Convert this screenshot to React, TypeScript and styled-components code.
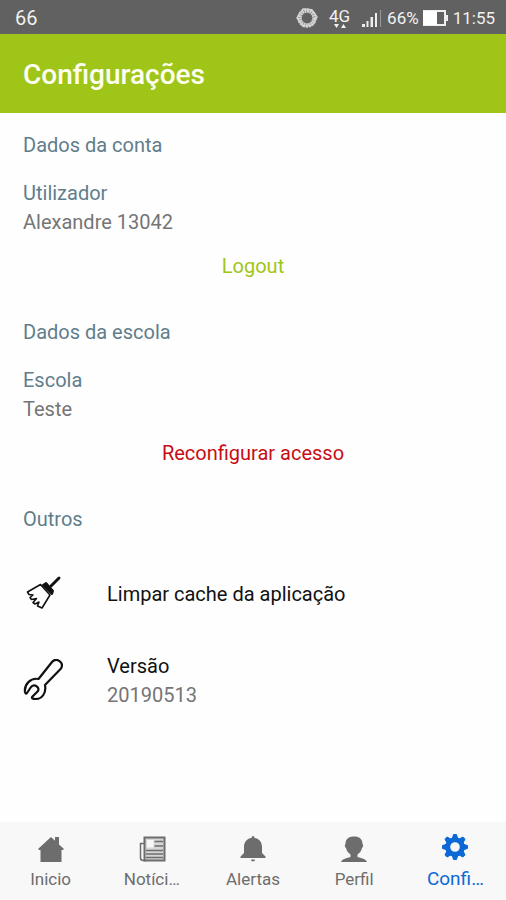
import React from 'react';
import styled, { createGlobalStyle } from 'styled-components';

const GlobalStyle = createGlobalStyle`
  * { box-sizing: border-box; }
  body {
    margin: 0;
    background: #fefefe;
    font-family: Roboto, "Liberation Sans", sans-serif;
    font-size: 20px;
    color: #757575;
  }
  button { font: inherit; border: 0; background: none; padding: 0; cursor: pointer; }
`;

const Screen = styled.div`
  min-height: 100vh;
  display: flex;
  flex-direction: column;
`;

const StatusBar = styled.div`
  display: flex;
  align-items: center;
  justify-content: space-between;
  height: 34px;
  padding: 2px 11px 0 15px;
  background: #616161;
  color: #f2f2f2;
  line-height: 32px;
`;

const StatusItems = styled.div`
  display: flex;
  align-items: center;
  font-size: 17px;
`;

const StatusIcon = styled.svg<{ $gap: number }>`
  display: block;
  margin-right: ${(p) => p.$gap}px;
`;

const Network = styled.span`
  display: flex;
  flex-direction: column;
  align-items: center;
  margin-right: 12px;
  font-size: 17px;
  line-height: 16px;
`;

const Header = styled.header`
  display: flex;
  align-items: center;
  height: 79px;
  padding: 2px 23px 0;
  background: #a0c519;
`;

const Title = styled.h1`
  margin: 0;
  font-size: 28px;
  font-weight: 500;
  line-height: 32px;
  color: #fdfeef;
`;

const Main = styled.main`
  flex: 1;
  padding: 18px 23px;
`;

const Section = styled.section`
  display: flex;
  flex-direction: column;
  margin-bottom: 38px;
`;

const Heading = styled.h2`
  margin: 0 0 20px;
  font-size: 20px;
  font-weight: 400;
  line-height: 28px;
  color: #607d8b;
`;

const Line = styled.div<{ $color?: string }>`
  line-height: 29px;
  color: ${(p) => p.$color ?? '#757575'};
`;

const Action = styled.button<{ $color: string }>`
  && {
    align-self: center;
    margin-top: 15px;
    line-height: 28px;
    color: ${(p) => p.$color};
  }
`;

const OptionList = styled.div`
  display: flex;
  flex-direction: column;
  gap: 29px;
  padding-top: 12px;
`;

const Option = styled.button`
  && {
    display: flex;
    align-items: center;
    gap: 44px;
    min-height: 58px;
    text-align: left;
    color: #111;
  }
`;

const OptionIcon = styled.svg`
  display: block;
  flex: none;
`;

const Nav = styled.nav`
  display: grid;
  grid-template-columns: repeat(5, 1fr);
  height: 78px;
  background: #f8f8f8;
`;

const Tab = styled.button<{ $active?: boolean }>`
  && {
    display: flex;
    flex-direction: column;
    align-items: center;
    padding-top: ${(p) => (p.$active ? 11 : 13)}px;
    font-size: ${(p) => (p.$active ? 19 : 17)}px;
    line-height: ${(p) => (p.$active ? 36 : 32)}px;
    color: ${(p) => (p.$active ? '#0b69d6' : '#6d6d6d')};
    white-space: nowrap;
  }
`;

const TabIcon = styled.svg`
  display: block;
  flex: none;
`;

const gearTeeth = [0, 45, 90, 135, 180, 225, 270, 315];

const icons = {
  home: (
    <path d="M1 14 14 2l4 3.700V2h4v7.400l5 4.600-1 1h-1.500v12h-21V15H2z" fill="currentColor" />
  ),
  news: (
    <g fill="none" stroke="currentColor">
      <path d="M6.500 2.500h20v23h-20z" fill="#d6d6d6" strokeWidth="2" />
      <path d="M6 8.500H2.500V23q0 2.500 3 2.500h3" strokeWidth="1.500" />
      <path d="M16.500 6.500H25M16.500 11H25M8 15.500h17M8 19h17M8 22.500h17" strokeWidth="1.500" />
      <path d="M9 5h6.500v7.500H9z" fill="#f8f8f8" stroke="none" />
    </g>
  ),
  bell: (
    <path
      d="M12.500 3q0-2 1.500-2t1.500 2C20.500 3.500 23 7.500 23 12v6l3.500 3.500V23h-25v-1.500L5 18v-6c0-4.500 2.500-8.500 7.500-9zM12 24.500h4q0 2-2 2t-2-2z"
      fill="currentColor"
    />
  ),
  person: (
    <path
      d="M14 1.500c5.500 0 8.500 2.500 8.500 7.500 1 .5 1 3-.5 4-.8 3.500-2.500 5-4.500 6.500V22c5 1.500 8.500 2 9.500 5H1c1-3 4.500-3.500 9.500-5v-2.500C8.500 18 6.800 16.500 6 13c-1.500-1-1.500-3.500-.5-4 0-5 3-7.500 8.500-7.500z"
      fill="currentColor"
    />
  ),
  gear: (
    <g>
      <circle cx="14" cy="14" r="7.300" fill="none" stroke="currentColor" strokeWidth="5" />
      {gearTeeth.map((angle) => (
        <path
          key={angle}
          d="M11.500 5 12.500 1.500h3L16.500 5z"
          fill="currentColor"
          stroke="currentColor"
          strokeLinejoin="round"
          transform={`rotate(${angle} 14 14)`}
        />
      ))}
    </g>
  ),
};

type IconName = keyof typeof icons;

const tabs: { label: string; icon: IconName; active?: boolean }[] = [
  { label: 'Inicio', icon: 'home' },
  { label: 'Notíci…', icon: 'news' },
  { label: 'Alertas', icon: 'bell' },
  { label: 'Perfil', icon: 'person' },
  { label: 'Confi…', icon: 'gear', active: true },
];

export default function App() {
  return (
    <Screen>
      <GlobalStyle />
      <StatusBar>
        <span>66</span>
        <StatusItems>
          <StatusIcon $gap={10} width="24" height="22" viewBox="0 0 24 22" fill="none" stroke="#d2d2d2">
            <circle cx="12" cy="11" r="7.500" strokeWidth="4.500" strokeDasharray="2.200 .5" />
            <path d="m8 2 9 1 5 7-5 8-9 1-6-8z" strokeWidth="1.500" />
          </StatusIcon>
          <Network>
            4G
            <svg width="14" height="5" viewBox="0 0 14 5" fill="#f2f2f2">
              <path d="M1 0h5L3.500 4zM8 4h5L10.500 0z" />
            </svg>
          </Network>
          <StatusIcon $gap={5} width="20" height="19" viewBox="0 0 20 19" fill="#eee">
            <path d="M0 15h3v3H0zM4.500 12h2v6h-2zM8.500 8h2.500v10H8.500zM13 4h2v14h-2z" />
            <path d="M18 1h1v17h-1z" fill="#999" />
          </StatusIcon>
          <span>66%</span>
          <StatusIcon $gap={4} width="30" height="18" viewBox="0 0 30 18">
            <path d="M5 2h21v14H5z" fill="#616161" stroke="#eee" strokeWidth="2" />
            <path d="M4 2h14v14H4z" fill="#fff" />
            <path d="M27 6h2v6h-2z" fill="#eee" />
          </StatusIcon>
          <span>11:55</span>
        </StatusItems>
      </StatusBar>

      <Header>
        <Title>Configurações</Title>
      </Header>

      <Main>
        <Section>
          <Heading>Dados da conta</Heading>
          <Line $color="#607d8b">Utilizador</Line>
          <Line>Alexandre 13042</Line>
          <Action $color="#a0c519">Logout</Action>
        </Section>
        <Section>
          <Heading>Dados da escola</Heading>
          <Line $color="#607d8b">Escola</Line>
          <Line>Teste</Line>
          <Action $color="#c90c14">Reconfigurar acesso</Action>
        </Section>
        <Section>
          <Heading>Outros</Heading>
          <OptionList>
            <Option>
              <OptionIcon width="40" height="40" viewBox="0 0 40 40" fill="none" stroke="#111">
                <path d="m28 12 8-8" strokeWidth="3" strokeLinecap="round" />
                <path d="m20 11 3-2 7 8-1 3z" fill="#111" strokeWidth="2" strokeLinejoin="round" />
                <path
                  d="M17.500 10.500 4.500 18l1.500 2.500 4 .5-3 2.500 1.500 2 5-1-3.500 4 2 1.500 4-2-1.500 4L19 34l8-13z"
                  strokeWidth="1.600"
                  strokeLinejoin="round"
                />
              </OptionIcon>
              <Line $color="#111">Limpar cache da aplicação</Line>
            </Option>
            <Option>
              <OptionIcon width="40" height="44" viewBox="0 0 40 44" fill="none" stroke="#111" strokeWidth="2.200" strokeLinejoin="round">
                <path d="M15.500 20 29 3c4.500-5 12.500.5 9 6.500L22 26c1.500 8-3 14-9 14-3.500 0-5-1-3.500-2.500l5.500-5.500c1.800-4-3.500-7.500-7-4l-4 6c-1 1-1.700.500-2-1C1 25.500 7.500 18.500 15.500 20z" />
              </OptionIcon>
              <div>
                <Line $color="#111">Versão</Line>
                <Line>20190513</Line>
              </div>
            </Option>
          </OptionList>
        </Section>
      </Main>

      <Nav>
        {tabs.map(({ label, icon, active }) => (
          <Tab key={label} $active={active} aria-current={active ? 'page' : undefined}>
            <TabIcon width="28" height="28" viewBox="0 0 28 28" aria-hidden="true">
              {icons[icon]}
            </TabIcon>
            {label}
          </Tab>
        ))}
      </Nav>
    </Screen>
  );
}
